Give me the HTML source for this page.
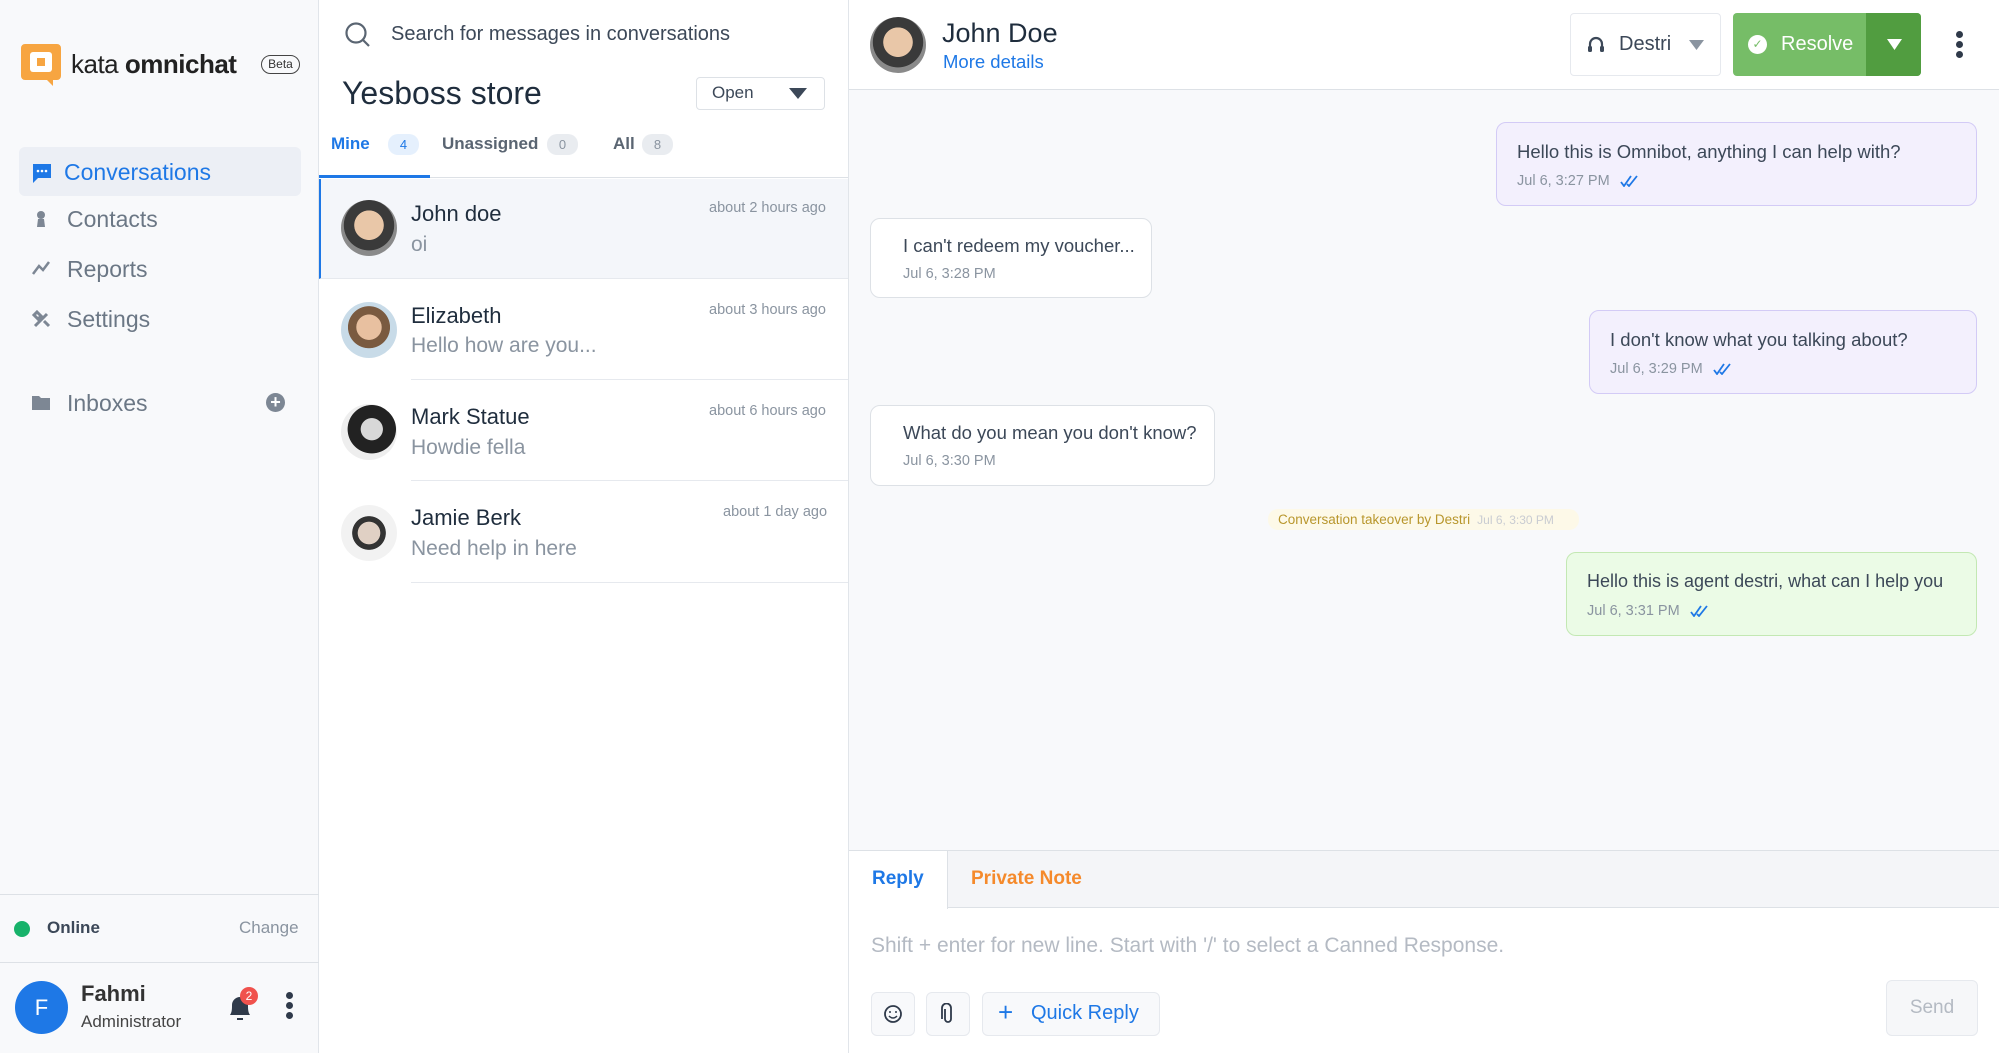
<!DOCTYPE html>
<html><head><meta charset="utf-8"><style>
*{box-sizing:border-box;margin:0;padding:0}
body{width:1999px;height:1053px;overflow:hidden;font-family:"Liberation Sans",sans-serif;background:#fff;position:relative;color:#1f2d3d}
.a{position:absolute;white-space:nowrap}
.nav{font-size:23px;color:#6b7785}
.av{position:absolute;border-radius:50%;overflow:hidden}
.name{font-size:22px;color:#1f2d3d}
.prev{font-size:21px;color:#8a94a0}
.time{font-size:14.5px;color:#8a94a0}
.b{position:absolute;border-radius:10px;border:1.5px solid #dde1e6;background:#fff}
.b .t{position:absolute;left:32px;top:18px;font-size:18.5px;color:#3c4858;white-space:nowrap}
.b .d{position:absolute;left:32px;top:65px;font-size:14.5px;color:#8a94a0;white-space:nowrap}
.p{background:#f3f0fd;border-color:#d3cbf6}
.g{background:#ebfbe6;border-color:#c3e8b3}
.tick{display:inline-block;margin-left:10px;vertical-align:middle}
</style></head><body>
<!-- sidebar -->
<div class="a" style="left:0;top:0;width:319px;height:1053px;background:#f8f9fb;border-right:1.5px solid #e1e5ea"></div>
<svg class="a" style="left:21px;top:44px" width="40" height="42" viewBox="0 0 40 42"><path d="M4 0h32a4 4 0 0 1 4 4v28a4 4 0 0 1-4 4H32v6l-6-6H4a4 4 0 0 1-4-4V4a4 4 0 0 1 4-4z" fill="#f7a541"/><rect x="9" y="8" width="22" height="20" rx="3" fill="#fff"/><rect x="16" y="14" width="8" height="8" fill="#f7a541"/></svg>
<div class="a" style="left:71px;top:49px;font-size:26px;color:#222;letter-spacing:-0.5px"><span>kata</span> <b>omnichat</b></div>
<div class="a" style="left:261px;top:55px;width:39px;height:19px;border:1.5px solid #444;border-radius:10px;font-size:12px;text-align:center;line-height:16px;color:#333">Beta</div>
<div class="a" style="left:19px;top:147px;width:282px;height:49px;background:#eceff5;border-radius:6px"></div>
<svg class="a" style="left:31px;top:162px" width="22" height="22" viewBox="0 0 22 22"><path d="M2 2h18v14H7l-5 5z" fill="#1e78e6"/><circle cx="7" cy="9" r="1.3" fill="#fff"/><circle cx="11" cy="9" r="1.3" fill="#fff"/><circle cx="15" cy="9" r="1.3" fill="#fff"/></svg>
<div class="a nav" style="left:64px;top:159px;color:#1e78e6">Conversations</div>
<svg class="a" style="left:32px;top:210px" width="18" height="18" viewBox="0 0 18 18"><circle cx="9" cy="5" r="4" fill="#7d8794"/><path d="M6 9h6l1 8H5z" fill="#7d8794"/></svg>
<div class="a nav" style="left:67px;top:206px">Contacts</div>
<svg class="a" style="left:32px;top:260px" width="20" height="16" viewBox="0 0 20 16"><path d="M1 14l6-8 4 4 6-8" stroke="#7d8794" stroke-width="2.5" fill="none"/></svg>
<div class="a nav" style="left:67px;top:256px">Reports</div>
<svg class="a" style="left:32px;top:309px" width="20" height="20" viewBox="0 0 20 20"><path d="M3 17L15 5M5 3l4 4-3 3-4-4zM12 12l5 5" stroke="#7d8794" stroke-width="3" fill="none"/></svg>
<div class="a nav" style="left:67px;top:306px">Settings</div>
<svg class="a" style="left:32px;top:394px" width="18" height="16" viewBox="0 0 18 16"><path d="M0 2h7l2 2h9v12H0z" fill="#7d8794"/></svg>
<div class="a nav" style="left:67px;top:390px">Inboxes</div>
<div class="a" style="left:266px;top:393px;width:19px;height:19px;border-radius:50%;background:#7d8794;color:#fff;font-size:18px;line-height:19px;text-align:center;font-weight:bold">+</div>
<div class="a" style="left:0;top:894px;width:319px;border-top:1.5px solid #dde1e6"></div>
<div class="a" style="left:14px;top:921px;width:16px;height:16px;border-radius:50%;background:#17b26a"></div>
<div class="a" style="left:47px;top:918px;font-size:17px;font-weight:bold;color:#3c4858">Online</div>
<div class="a" style="left:239px;top:918px;font-size:17px;color:#8a94a0">Change</div>
<div class="a" style="left:0;top:962px;width:319px;border-top:1.5px solid #dde1e6"></div>
<div class="a" style="left:15px;top:981px;width:53px;height:53px;border-radius:50%;background:#1e78e6;color:#fff;font-size:22px;text-align:center;line-height:53px">F</div>
<div class="a" style="left:81px;top:981px;font-size:22px;font-weight:bold;color:#333">Fahmi</div>
<div class="a" style="left:81px;top:1012px;font-size:17px;color:#444">Administrator</div>
<svg class="a" style="left:227px;top:993px" width="26" height="30" viewBox="0 0 26 30"><path d="M3 22c2-3 2-6 2-10a8 8 0 0 1 16 0c0 4 0 7 2 10z" fill="#2f3a4a"/><rect x="10" y="25" width="6" height="2" fill="#2f3a4a"/></svg>
<div class="a" style="left:240px;top:987px;width:18px;height:18px;border-radius:50%;background:#f0524d;color:#fff;font-size:12px;text-align:center;line-height:18px">2</div>
<div class="a" style="left:286px;top:992px;width:7px;height:7px;border-radius:50%;background:#2f3a4a;box-shadow:0 10px 0 #2f3a4a,0 20px 0 #2f3a4a"></div>
<!-- list column -->
<div class="a" style="left:848px;top:0;height:1053px;border-left:1.5px solid #e1e5ea"></div>
<svg class="a" style="left:344px;top:21px" width="28" height="28" viewBox="0 0 28 28"><circle cx="12" cy="12" r="9.5" stroke="#5a6572" stroke-width="2.2" fill="none"/><path d="M19 19l6 6" stroke="#5a6572" stroke-width="2.2"/></svg>
<div class="a" style="left:391px;top:23px;font-size:20px;color:#3c4858">Search for messages in conversations</div>
<div class="a" style="left:342px;top:75px;font-size:32px;color:#1f2d3d">Yesboss store</div>
<div class="a" style="left:696px;top:77px;width:129px;height:33px;border:1.5px solid #dde1e6;border-radius:4px"></div>
<div class="a" style="left:712px;top:83px;font-size:17px;color:#3c4858">Open</div>
<svg class="a" style="left:789px;top:88px" width="18" height="12"><path d="M0 0h18L9 11z" fill="#3c4858"/></svg>
<div class="a" style="left:331px;top:134px;font-size:17px;color:#1e78e6;font-weight:bold">Mine</div>
<div class="a" style="left:388px;top:134px;width:31px;height:21px;border-radius:10px;background:#e5f0fd;color:#1e78e6;font-size:13px;text-align:center;line-height:21px">4</div>
<div class="a" style="left:442px;top:134px;font-size:17px;color:#5a6572;font-weight:bold">Unassigned</div>
<div class="a" style="left:547px;top:134px;width:31px;height:21px;border-radius:10px;background:#e9ecf0;color:#8a94a0;font-size:13px;text-align:center;line-height:21px">0</div>
<div class="a" style="left:613px;top:134px;font-size:17px;color:#5a6572;font-weight:bold">All</div>
<div class="a" style="left:642px;top:134px;width:31px;height:21px;border-radius:10px;background:#e9ecf0;color:#8a94a0;font-size:13px;text-align:center;line-height:21px">8</div>
<div class="a" style="left:319px;top:177px;width:529px;border-top:1.5px solid #dde1e6"></div>
<div class="a" style="left:319px;top:175px;width:111px;height:3px;background:#1e78e6"></div>
<div class="a" style="left:319px;top:179px;width:529px;height:100px;background:#f4f6fa;border-left:2.5px solid #1e78e6;border-bottom:1.5px solid #e6e9ee"></div>
<div class="av" style="left:341px;top:200px;width:56px;height:56px;background:radial-gradient(circle at 50% 45%,#e9c7a8 0 35%,#3a3a3a 36% 60%,#8a8a8a 61%)"></div>
<div class="a name" style="left:411px;top:201px">John doe</div>
<div class="a prev" style="left:411px;top:233px">oi</div>
<div class="a time" style="left:709px;top:200px">about 2 hours ago</div>
<div class="av" style="left:341px;top:302px;width:56px;height:56px;background:radial-gradient(circle at 50% 45%,#e8c0a0 0 30%,#7a5a40 31% 50%,#c8dbe8 51%)"></div>
<div class="a name" style="left:411px;top:303px">Elizabeth</div>
<div class="a prev" style="left:411px;top:334px">Hello how are you...</div>
<div class="a time" style="left:709px;top:302px">about 3 hours ago</div>
<div class="a" style="left:411px;top:379px;width:437px;border-top:1.5px solid #e6e9ee"></div>
<div class="av" style="left:341px;top:404px;width:56px;height:56px;background:radial-gradient(circle at 55% 45%,#d8d8d8 0 25%,#222 26% 55%,#eee 56%)"></div>
<div class="a name" style="left:411px;top:404px">Mark Statue</div>
<div class="a prev" style="left:411px;top:436px">Howdie fella</div>
<div class="a time" style="left:709px;top:403px">about 6 hours ago</div>
<div class="a" style="left:411px;top:480px;width:437px;border-top:1.5px solid #e6e9ee"></div>
<div class="av" style="left:341px;top:505px;width:56px;height:56px;background:radial-gradient(circle at 50% 50%,#e0d0c4 0 28%,#333 29% 42%,#f2f2f2 43%)"></div>
<div class="a name" style="left:411px;top:505px">Jamie Berk</div>
<div class="a prev" style="left:411px;top:537px">Need help in here</div>
<div class="a time" style="left:723px;top:504px">about 1 day ago</div>
<div class="a" style="left:411px;top:582px;width:437px;border-top:1.5px solid #e6e9ee"></div>
<!-- chat -->
<div class="a" style="left:849px;top:90px;width:1150px;height:760px;background:#f8f9fb"></div>
<div class="a" style="left:849px;top:89px;width:1150px;border-top:1.5px solid #dde1e6"></div>
<div class="av" style="left:870px;top:17px;width:56px;height:56px;background:radial-gradient(circle at 50% 45%,#e9c7a8 0 35%,#3a3a3a 36% 60%,#8a8a8a 61%)"></div>
<div class="a" style="left:942px;top:18px;font-size:27px;color:#1f2d3d">John Doe</div>
<div class="a" style="left:943px;top:51px;font-size:18.5px;color:#1e78e6">More details</div>
<div class="a" style="left:1570px;top:13px;width:151px;height:63px;border:1.5px solid #e6e9ee;border-radius:4px"></div>
<svg class="a" style="left:1587px;top:35px" width="18" height="20" viewBox="0 0 18 20"><path d="M3 12V9a6 6 0 0 1 12 0v3" stroke="#3c4858" stroke-width="2.2" fill="none"/><rect x="1" y="11" width="4" height="6" rx="1.5" fill="#3c4858"/><rect x="13" y="11" width="4" height="6" rx="1.5" fill="#3c4858"/></svg>
<div class="a" style="left:1619px;top:33px;font-size:20px;color:#3c4858">Destri</div>
<svg class="a" style="left:1689px;top:40px" width="15" height="11"><path d="M0 0h15L7.5 10z" fill="#8a94a0"/></svg>
<div class="a" style="left:1733px;top:13px;width:188px;height:63px;background:#76bd67;border-radius:4px;overflow:hidden"><div style="position:absolute;left:133px;top:0;width:55px;height:63px;background:#519d40"></div></div>
<div class="a" style="left:1748px;top:35px;width:19px;height:19px;border-radius:50%;background:#fff;color:#76bd67;font-size:12px;text-align:center;line-height:19px">✓</div>
<div class="a" style="left:1781px;top:33px;font-size:20px;color:#fff">Resolve</div>
<svg class="a" style="left:1887px;top:39px" width="15" height="12"><path d="M0 0h15L7.5 11z" fill="#fff"/></svg>
<div class="a" style="left:1956px;top:31px;width:7px;height:7px;border-radius:50%;background:#2f3a4a;box-shadow:0 10px 0 #2f3a4a,0 20px 0 #2f3a4a"></div>

<div class="b p" style="left:1496px;top:122px;width:481px;height:84px"><div class="t" style="left:20px">Hello this is Omnibot, anything I can help with?</div><div class="d" style="left:20px;top:50px">Jul 6, 3:27 PM<svg class="tick" width="20" height="12" viewBox="0 0 20 12"><path d="M1 7l3 4 7-10M7 9l2 2 8-10" stroke="#1e78e6" stroke-width="1.8" fill="none"/></svg></div></div>
<div class="b" style="left:870px;top:218px;width:282px;height:80px"><div class="t" style="top:16px">I can't redeem my voucher...</div><div class="d" style="top:47px">Jul 6, 3:28 PM</div></div>
<div class="b p" style="left:1589px;top:310px;width:388px;height:84px"><div class="t" style="left:20px">I don't know what you talking about?</div><div class="d" style="left:20px;top:50px">Jul 6, 3:29 PM<svg class="tick" width="20" height="12" viewBox="0 0 20 12"><path d="M1 7l3 4 7-10M7 9l2 2 8-10" stroke="#1e78e6" stroke-width="1.8" fill="none"/></svg></div></div>
<div class="b" style="left:870px;top:405px;width:345px;height:81px"><div class="t" style="top:16px">What do you mean you don't know?</div><div class="d" style="top:47px">Jul 6, 3:30 PM</div></div>
<div class="a" style="left:1268px;top:509px;width:311px;height:21px;border-radius:10px;background:#fdf9e8;font-size:13.5px;line-height:21px;padding-left:10px;color:#b8962c">Conversation takeover by Destri <span style="color:#c9ccd2;font-size:12px">&nbsp;Jul 6, 3:30 PM</span></div>
<div class="b g" style="left:1566px;top:552px;width:411px;height:84px"><div class="t" style="left:20px;font-size:18px">Hello this is agent destri, what can I help you</div><div class="d" style="left:20px;top:50px">Jul 6, 3:31 PM<svg class="tick" width="20" height="12" viewBox="0 0 20 12"><path d="M1 7l3 4 7-10M7 9l2 2 8-10" stroke="#1e78e6" stroke-width="1.8" fill="none"/></svg></div></div>

<!-- reply -->
<div class="a" style="left:849px;top:850px;width:1150px;height:58px;background:#f4f5f8;border-top:1.5px solid #dde1e6;border-bottom:1.5px solid #dde1e6"></div>
<div class="a" style="left:849px;top:851px;width:99px;height:58px;background:#fff;border-right:1.5px solid #dde1e6"></div>
<div class="a" style="left:872px;top:868px;font-size:19px;font-weight:bold;color:#1e78e6">Reply</div>
<div class="a" style="left:971px;top:868px;font-size:19px;font-weight:bold;color:#f58a2c">Private Note</div>
<div class="a" style="left:871px;top:934px;font-size:21px;color:#b4bac3">Shift + enter for new line. Start with '/' to select a Canned Response.</div>
<div class="a" style="left:871px;top:992px;width:44px;height:44px;border:1.5px solid #e6e9ee;border-radius:6px;background:#f8f9fb"></div>
<svg class="a" style="left:883px;top:1004px" width="20" height="20" viewBox="0 0 20 20"><circle cx="10" cy="10" r="8" stroke="#2f3a4a" stroke-width="1.8" fill="none"/><circle cx="7" cy="8" r="1" fill="#2f3a4a"/><circle cx="13" cy="8" r="1" fill="#2f3a4a"/><path d="M6 12q4 4 8 0" stroke="#2f3a4a" stroke-width="1.5" fill="none"/></svg>
<div class="a" style="left:926px;top:992px;width:44px;height:44px;border:1.5px solid #e6e9ee;border-radius:6px;background:#f8f9fb"></div>
<svg class="a" style="left:939px;top:1003px" width="18" height="22" viewBox="0 0 18 22"><path d="M6 6v10a3 3 0 0 0 6 0V5a4.5 4.5 0 0 0-9 0v11" stroke="#2f3a4a" stroke-width="1.8" fill="none"/></svg>
<div class="a" style="left:982px;top:992px;width:178px;height:44px;border:1.5px solid #e6e9ee;border-radius:6px;background:#f8f9fb"></div>
<div class="a" style="left:998px;top:997px;font-size:26px;color:#1e78e6">+</div>
<div class="a" style="left:1031px;top:1002px;font-size:20px;color:#1e78e6">Quick Reply</div>
<div class="a" style="left:1886px;top:980px;width:92px;height:56px;border:1.5px solid #e6e9ee;border-radius:6px;background:#f6f7f9;font-size:19px;color:#b4bac3;text-align:center;line-height:53px">Send</div>
</body></html>
